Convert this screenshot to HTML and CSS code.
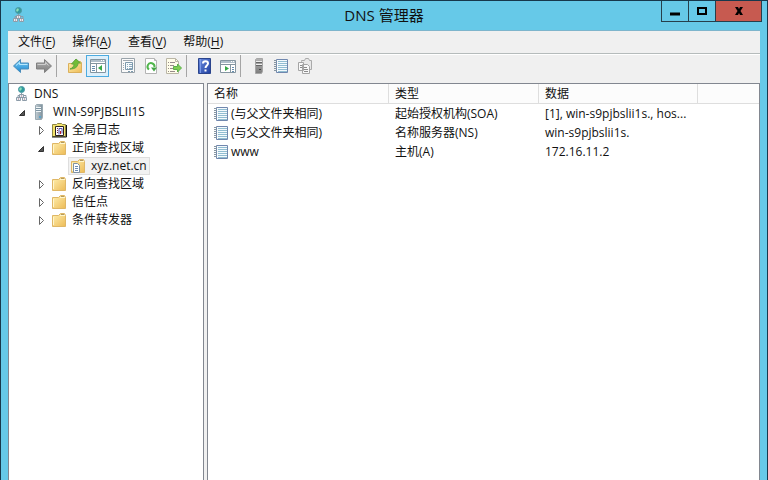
FILE: index.html
```html
<!DOCTYPE html>
<html lang="zh-CN">
<head>
<meta charset="utf-8">
<title>DNS 管理器</title>
<link rel="stylesheet" href="styles.css">
</head>
<body>
<svg class="sprite" aria-hidden="true">
  <defs>
    <linearGradient id="gold" x1="0" y1="0" x2="1" y2="1"><stop offset="0" stop-color="#fff0b0"/><stop offset="1" stop-color="#edbb56"/></linearGradient>
    <linearGradient id="blue" x1="0" y1="0" x2="0" y2="1"><stop offset="0" stop-color="#7fd0f7"/><stop offset="1" stop-color="#1b86d0"/></linearGradient>
    <linearGradient id="grey" x1="0" y1="0" x2="0" y2="1"><stop offset="0" stop-color="#b4b4b4"/><stop offset="1" stop-color="#7c7c7c"/></linearGradient>
    <linearGradient id="navy" x1="0" y1="0" x2="1" y2="1"><stop offset="0" stop-color="#6b8ce0"/><stop offset="1" stop-color="#1f3fa0"/></linearGradient>
    <linearGradient id="tower" x1="0" y1="0" x2="1" y2="0"><stop offset="0" stop-color="#c3ced4"/><stop offset="1" stop-color="#7d909b"/></linearGradient>
  </defs>
  <symbol id="dns" viewBox="0 0 16 16">
    <circle cx="7.500" cy="3.500" r="3" fill="#319a9c" stroke="#4b9aa6"/>
    <path d="M5 3l2-2 1 2-2 2z" fill="#8be0bc"/>
    <path d="M7.500 7v3M4 11V9.500h8V11" fill="none" stroke="#8b9baa"/>
    <path d="M5.500 8.500h4v3h-4zM2.500 11.500h4v3h-4zM8.500 11.500h4v3h-4z" fill="#e8edf2" stroke="#8d9ca9"/>
    <path d="M4 13h1M10 13h1M7 10h1" stroke="#a26d7c"/>
  </symbol>
  <symbol id="server" viewBox="0 0 16 16">
    <path d="M3.500 1.500l1-1h6v13l-1 2h-6z" fill="url(#tower)" stroke="#9aaab3"/>
    <path d="M4 3.500h5M4 5.500h5M4 7.500h5" stroke="#f1f6f8"/>
    <path d="M4 4.500h5M4 6.500h5" stroke="#7f96a3"/>
    <path d="M7 12h2v2H7z" fill="#5ca3c9"/>
  </symbol>
  <symbol id="server-grey" viewBox="0 0 16 16">
    <path d="M4.500 1.500l1-1h6v13l-1 2h-6z" fill="url(#grey)" stroke="#a6a6a6"/>
    <path d="M5 3.500h6M5 6.500h6" stroke="#eee"/>
    <path d="M5 4.500h6M5 7.500h6" stroke="#666"/>
    <path d="M8 11h2v1H8z" fill="#444"/>
  </symbol>
  <symbol id="folder" viewBox="0 0 16 16">
    <path d="M1.500 3.500h6l2-2h4l1 2v11h-13z" fill="url(#gold)" stroke="#dfb766"/>
    <path d="M9 3.500h5M2.500 5v8" stroke="#fff6cd"/>
    <path d="M10 2.500h3" stroke="#b49a5e"/>
  </symbol>
  <symbol id="zone" viewBox="0 0 16 16">
    <use href="#folder"/>
    <path d="M3.500 5.500h4l2 2v7h-6z" fill="#fff" stroke="#7f91a4"/>
    <path d="M5 8.500h3M5 10.500h3M5 12.500h3" stroke="#6c8db4"/>
  </symbol>
  <symbol id="log" viewBox="0 0 16 16">
    <path d="M1.500 2.500h4l1-1h4l1 1h3v12h-13z" fill="#f3e36a" stroke="#8e8646"/>
    <path d="M1 15h14.500V3" fill="none" stroke="#111"/>
    <path d="M4.500 4.500h8v9h-8z" fill="#fff" stroke="#292020"/>
    <path d="M6.500 6v6" stroke="#7f2b35" stroke-dasharray="1 1"/>
    <path d="M8 12.500V6.500h3v5" fill="none" stroke="#5750ad"/>
    <path d="M9 9h1v3H9z" fill="#b8242f"/>
  </symbol>
  <symbol id="record" viewBox="1 0 16 16">
    <path d="M3.500 1.500h11v13h-11z" fill="#f4fafd" stroke="#7087ae"/>
    <path d="M5 3.500h9M5 5.500h9M5 7.500h9M5 9.500h9M5 11.500h9M5 13.500h9" stroke="#91bdd1"/>
    <path d="M1 2.500h3M1 4.500h3M1 6.500h3M1 8.500h3M1 10.500h3M1 12.500h3" stroke="#8696a3"/>
  </symbol>
  <symbol id="back" viewBox="0 0 16 16"><path d="M.5 8L7.500 1.500v3.500h8v6h-8v3.500z" fill="url(#blue)" stroke="#4a8cba"/><path d="M3 7.500l3.500-3V6.500h8" fill="none" stroke="#b6e8ff"/></symbol>
  <symbol id="forward" viewBox="0 0 16 16"><path d="M15.500 8L8.500 1.500v3.500h-8v6h8v3.500z" fill="url(#grey)" stroke="#808080"/><path d="M1.500 6.500h8V4.500l3 3" fill="none" stroke="#cecece"/></symbol>
  <symbol id="up" viewBox="0 0 16 16">
    <path d="M1.500 5.500h5l2-2h5l1 1v10h-13z" fill="url(#gold)" stroke="#dbb05c"/>
    <path d="M3 11c3-1 4-3 4-5H4.500L9 1l4.500 4H11c0 4-3 6-8 6z" fill="#71bd36" stroke="#62a440"/>
  </symbol>
  <symbol id="console" viewBox="0 0 16 16">
    <path d="M.5 1.500h15v13H.5z" fill="#fff" stroke="#8495a0"/><path d="M1 3h14" stroke="#b0bfca" stroke-width="2"/><path d="M1 5.500h14M6.500 6v8" stroke="#8495a0"/>
    <path d="M2 8.500h3M2 10.500h3M2 12.500h3" stroke="#668eb0"/><path d="M12 7v6L8 10z" fill="#36a846"/><path d="M11 2.500h1M13 2.500h1" stroke="#fff"/>
  </symbol>
  <symbol id="panel" viewBox="0 0 16 16">
    <path d="M.5 2.500h15v12H.5z" fill="#fff" stroke="#8495a0"/><path d="M1 4h14" stroke="#b0bfca" stroke-width="2"/><path d="M1 6.500h14M10.500 7v7" stroke="#8495a0"/>
    <path d="M12 9.500h2M12 11.500h2M12 13.500h2" stroke="#668eb0"/><path d="M5 8v5l4-2.500z" fill="#36a846"/><path d="M11 3.500h1M13 3.500h1" stroke="#fff"/>
  </symbol>
  <symbol id="properties" viewBox="0 0 16 16">
    <path d="M1.500.5h13v14h-13z" fill="#fafafa" stroke="#99a3aa"/><path d="M3 2.500h10M3 5.500h1M3 7.500h1M3 9.500h1M3 11.500h1" stroke="#a0a9b1"/>
    <path d="M5.500 4.500h7v7h-7z" fill="#f7fbfd" stroke="#7c99ac"/><path d="M7 6.500h1M9 6.500h3M7 8.500h1M9 8.500h3M7 10.500h1M9 10.500h3" stroke="#8ca9bd"/><path d="M8 13.500h2M11 13.500h2" stroke="#7c99ac"/>
  </symbol>
  <symbol id="refresh" viewBox="0 0 16 16">
    <path d="M2.500.5h9l2 2v13h-11z" fill="#fff" stroke="#b4b4b4"/><path d="M11.500.5v2h2" fill="#ddd" stroke="#b4b4b4"/>
    <path d="M6 11.500A3.500 3.500 0 1 1 11.500 9" fill="none" stroke="#51b64c" stroke-width="2"/><path d="M8 9.500h6l-3 4z" fill="#45a547"/>
  </symbol>
  <symbol id="export" viewBox="0 0 16 16">
    <path d="M.5.5h9l3 3v12H.5z" fill="#fffdea" stroke="#bab6a6"/><path d="M9.500.5v3h3" fill="none" stroke="#bab6a6"/>
    <path d="M2 4.500h1M4 4.500h5M2 7.500h1M4 7.500h4M2 10.500h1M4 10.500h3M2 13.500h1M4 13.500h5" stroke="#978b8b"/>
    <path d="M7.500 8.500h4V6l4 4-4 4v-2.500h-4z" fill="#80cf50" stroke="#5bb04c"/>
  </symbol>
  <symbol id="help" viewBox="0 0 16 16">
    <path d="M1.500.5h12v15h-12z" fill="url(#navy)" stroke="#2b458d"/><path d="M3.500 1v14" stroke="#7a99e8"/>
    <path d="M6 5.500c0-3 5-3 5 0 0 2-2.500 2-2.500 4.500M7.500 12.500h2" fill="none" stroke="#fff" stroke-width="2"/>
  </symbol>
  <symbol id="copy" viewBox="0 0 16 16">
    <path d="M4.500 3.500V2.500h3l1-2h3l1 2h2v9h-10z" fill="#e8e8e8" stroke="#aaa"/>
    <path d="M1.500 4.500h5v8h-5zM5.500 6.500h5l2 2v7h-7z" fill="#f8f8f8" stroke="#a4a4a4"/><path d="M3 7.500h2M3 9.500h2M7 9.500h3M7 11.500h4M7 13.500h4" stroke="#8b8b8b"/>
  </symbol>
  <symbol id="closed" viewBox="0 0 8 10"><path d="M1.500 1.500l4 4-4 4z" fill="#fff" stroke="#666"/></symbol>
  <symbol id="open" viewBox="0 0 8 10"><path d="M5.500 3.500v5h-5z" fill="#555" stroke="#333"/></symbol>
</svg>
<div class="window">
  <header class="titlebar">
    <svg class="icon"><use href="#dns"/></svg>
    <h1>DNS 管理器</h1>
    <div class="controls">
      <button aria-label="最小化"><svg viewBox="0 0 12 10"><path d="M1 8h10" stroke="#000" stroke-width="3"/></svg></button>
      <button aria-label="最大化"><svg viewBox="0 0 12 10"><path d="M2 2h8v6H2z" fill="none" stroke="#000" stroke-width="2"/></svg></button>
      <button class="close" aria-label="关闭"><svg viewBox="0 0 12 10"><path d="M2 1h3l1 2 1-2h3L7.500 5 10 9H7L6 7 5 9H2l2.500-4z"/></svg></button>
    </div>
  </header>
  <main class="client">
    <nav class="menubar">
      <button>文件(<u>F</u>)</button><button>操作(<u>A</u>)</button><button>查看(<u>V</u>)</button><button>帮助(<u>H</u>)</button>
    </nav>
    <div class="toolbar" role="toolbar">
      <div class="group">
        <button aria-label="后退"><svg class="icon"><use href="#back"/></svg></button>
        <button aria-label="前进"><svg class="icon"><use href="#forward"/></svg></button>
      </div>
      <div class="group ruled">
        <button aria-label="上移一级"><svg class="icon"><use href="#up"/></svg></button>
        <button class="active" aria-label="显示控制台树"><svg class="icon"><use href="#console"/></svg></button>
      </div>
      <div class="group">
        <button aria-label="属性"><svg class="icon"><use href="#properties"/></svg></button>
        <button aria-label="刷新"><svg class="icon"><use href="#refresh"/></svg></button>
        <button aria-label="导出列表"><svg class="icon"><use href="#export"/></svg></button>
      </div>
      <div class="group ruled">
        <button aria-label="帮助"><svg class="icon"><use href="#help"/></svg></button>
        <button aria-label="显示操作窗格"><svg class="icon"><use href="#panel"/></svg></button>
      </div>
      <div class="group ruled">
        <button aria-label="服务器"><svg class="icon"><use href="#server-grey"/></svg></button>
        <button aria-label="记录"><svg class="icon"><use href="#record"/></svg></button>
        <button aria-label="新建区域"><svg class="icon"><use href="#copy"/></svg></button>
      </div>
    </div>
    <div class="panes">
      <ul class="pane tree">
        <li><div class="node root"><svg class="icon"><use href="#dns"/></svg><span>DNS</span></div>
          <ul>
            <li><div class="node"><svg class="arrow"><use href="#open"/></svg><svg class="icon"><use href="#server"/></svg><span>WIN-S9PJBSLII1S</span></div>
              <ul>
                <li><div class="node"><svg class="arrow"><use href="#closed"/></svg><svg class="icon"><use href="#log"/></svg><span>全局日志</span></div></li>
                <li><div class="node"><svg class="arrow"><use href="#open"/></svg><svg class="icon"><use href="#folder"/></svg><span>正向查找区域</span></div>
                  <ul>
                    <li><div class="node selected"><svg class="icon"><use href="#zone"/></svg><span>xyz.net.cn</span></div></li>
                  </ul>
                </li>
                <li><div class="node"><svg class="arrow"><use href="#closed"/></svg><svg class="icon"><use href="#folder"/></svg><span>反向查找区域</span></div></li>
                <li><div class="node"><svg class="arrow"><use href="#closed"/></svg><svg class="icon"><use href="#folder"/></svg><span>信任点</span></div></li>
                <li><div class="node"><svg class="arrow"><use href="#closed"/></svg><svg class="icon"><use href="#folder"/></svg><span>条件转发器</span></div></li>
              </ul>
            </li>
          </ul>
        </li>
      </ul>
      <section class="pane list">
        <table>
          <colgroup><col class="name"><col class="type"><col class="data"><col></colgroup>
          <thead><tr><th>名称</th><th>类型</th><th>数据</th><td></td></tr></thead>
          <tbody>
            <tr><td><div class="record"><svg class="icon"><use href="#record"/></svg>(与父文件夹相同)</div></td><td>起始授权机构(SOA)</td><td>[1], win-s9pjbslii1s., hos...</td><td></td></tr>
            <tr><td><div class="record"><svg class="icon"><use href="#record"/></svg>(与父文件夹相同)</div></td><td>名称服务器(NS)</td><td>win-s9pjbslii1s.</td><td></td></tr>
            <tr><td><div class="record"><svg class="icon"><use href="#record"/></svg>www</div></td><td>主机(A)</td><td>172.16.11.2</td><td></td></tr>
          </tbody>
        </table>
      </section>
    </div>
  </main>
</div>
</body>
</html>
```
FILE: styles.css
```css
* { box-sizing: border-box; }

body {
  margin: 0;
  color: #111;
  font: 12px/18px "Open Sans", "Noto Sans CJK SC", sans-serif;
}

button {
  margin: 0;
  padding: 0;
  border: 0;
  background: none;
  color: inherit;
  font: inherit;
}

ul { margin: 0; padding: 0; list-style: none; }

.sprite { position: absolute; width: 0; height: 0; }
.icon { flex: none; display: block; width: 16px; height: 16px; }

.window {
  display: flex;
  flex-direction: column;
  min-height: 100vh;
  padding: 0 7px;
  border: solid #17384c;
  border-width: 1px 1px 0;
  background: #66c9e8;
}

.titlebar {
  display: grid;
  grid-template-columns: 1fr auto 1fr;
  height: 29px;
}
.titlebar .icon { margin: 6px 3px; }
.titlebar h1 {
  margin: 0;
  font-size: 15px;
  font-weight: 400;
  line-height: 28px;
}

.controls {
  display: flex;
  justify-self: end;
  height: 21px;
  margin-right: -2px;
  border: 1px solid #263f4c;
  border-top: 0;
}
.controls button {
  display: grid;
  place-items: center;
  width: 27px;
  border-right: 1px solid #263f4c;
}
.controls svg { width: 12px; height: 10px; }
.controls .close { width: 45px; border-right: 0; background: #c75a50; }

.client {
  flex: 1;
  display: flex;
  flex-direction: column;
  border-top: 1px solid #7eb5cc;
  background: #f0f0f0;
}

.menubar {
  display: flex;
  gap: 17px;
  height: 23px;
  padding: 1px 10px 0;
  border-bottom: 1px solid #b5bbbb;
}
.menubar button { height: 20px; }
.menubar u { text-underline-offset: 2px; }

.toolbar {
  display: flex;
  height: 29px;
  padding: 0 1px 6px;
  border-top: 1px solid #fff;
}
.group { display: flex; }
.group + .group { margin-left: 7px; }
.group + .ruled {
  margin-left: 1px;
  padding-left: 6px;
  border-left: 1px solid #a5a5a5;
}
.group button {
  display: grid;
  place-items: center;
  width: 23px;
  height: 22px;
}
.group .active { border: 1px solid #4cabe0; background: #dceffb; }

.panes {
  flex: 1;
  display: grid;
  grid-template-columns: 196px 1fr;
  gap: 3px;
}
.pane {
  min-width: 0;
  border: 1px solid #828790;
  border-bottom: 0;
  background: #fff;
}

.tree { padding: 1px 0 0 7px; }
.tree ul ul { padding-left: 19px; }
.node { display: flex; align-items: center; width: max-content; height: 18px; }
.node .icon { margin-left: 5px; }
.node span { padding: 0 3px 0 5px; }
.node.root .icon { margin-left: -2px; margin-right: -1px; }
.node .arrow { width: 8px; height: 10px; margin-left: 3px; }
.node.selected {
  margin-left: 14px;
  outline: 1px solid #dedede;
  outline-offset: -1px;
  background: #f2f2f2;
}
.node.selected .icon { margin-left: 2px; }

table { width: 100%; border-collapse: separate; border-spacing: 0; table-layout: fixed; }
.name { width: 181px; }
.type { width: 150px; }
.data { width: 159px; }
th, td { height: 19px; padding: 0 6px; line-height: 18px; text-align: left; font-weight: 400; white-space: nowrap; }
thead th, thead td { height: 20px; border-bottom: 1px solid #dedede; background: #fcfcfc; }
th { border-right: 1px solid #dedede; }
.record { display: flex; align-items: center; gap: 1px; }
```
